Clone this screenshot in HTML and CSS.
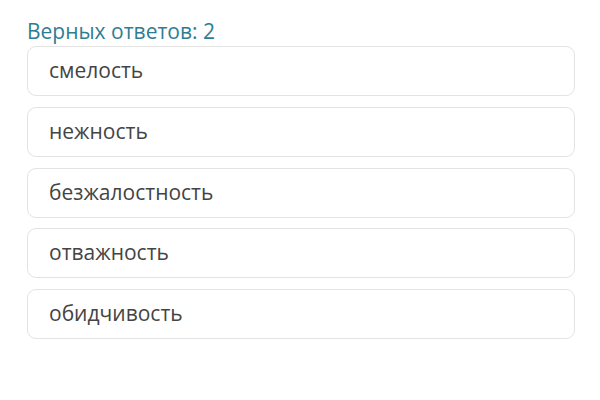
FILE: index.html
```html
<!DOCTYPE html>
<html lang="ru">
<head>
<meta charset="utf-8">
<link rel="stylesheet" href="styles.css">
</head>
<body>
<div class="page">
  <div class="title">Верных ответов: 2</div>
  <div class="list">
    <div class="option">смелость</div>
    <div class="option">нежность</div>
    <div class="option">безжалостность</div>
    <div class="option">отважность</div>
    <div class="option">обидчивость</div>
  </div>
</div>
</body>
</html>
```
FILE: styles.css
```css
html, body {
  margin: 0;
  padding: 0;
  background: #ffffff;
}
body {
  font-family: "Open Sans", "Noto Sans", sans-serif;
}
.page {
  padding: 16px 25px 0 27px;
}
.title {
  font-size: 21px;
  line-height: 30px;
  color: #2e7d93;
  height: 30px;
}
.list {
  display: flex;
  flex-direction: column;
  gap: 10.75px;
}
.option {
  box-sizing: border-box;
  height: 50px;
  border: 1px solid #e3e3e3;
  border-radius: 9px;
  padding: 0 21px 2px;
  display: flex;
  align-items: center;
  font-size: 21px;
  color: #444444;
}
```
